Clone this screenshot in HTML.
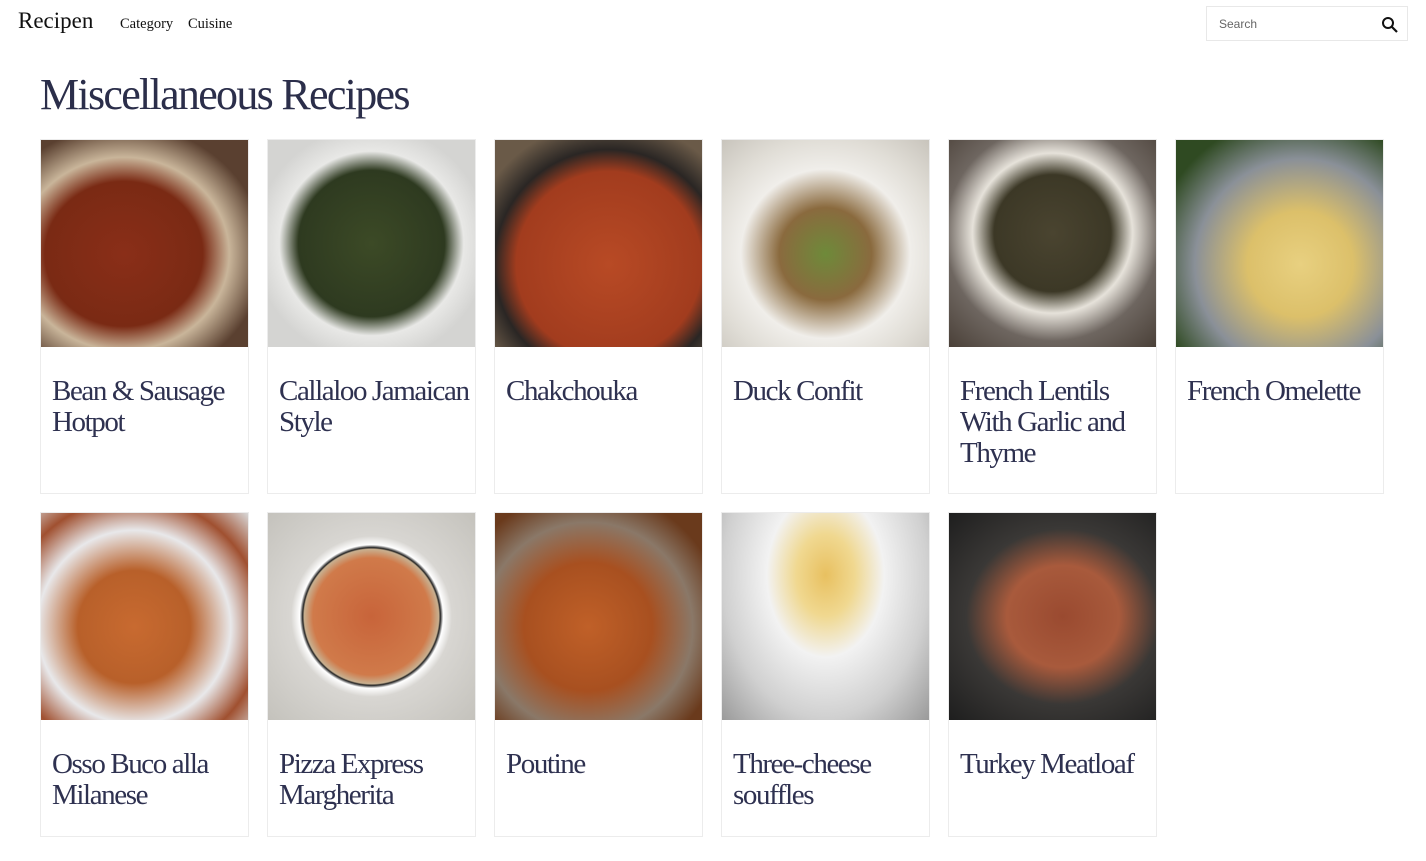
<!DOCTYPE html>
<html><head><meta charset="utf-8"><style>
*{margin:0;padding:0;box-sizing:border-box}
body{width:1426px;height:861px;background:#fff;font-family:"Liberation Serif",serif;position:relative;overflow:hidden}
.logo{position:absolute;left:18px;top:8px;font-size:23px;color:#111}
.nav{position:absolute;top:16px;font-size:14.5px;color:#111}
.search{position:absolute;left:1206px;top:6px;width:202px;height:35px;border:1px solid #e8e8e8;font-family:"Liberation Sans",sans-serif;font-size:12px;color:#666;padding:10px 0 0 12px}
.search svg{position:absolute;right:8px;top:9px}
h1{position:absolute;left:40px;top:69px;font-weight:normal;font-size:44px;color:#2b2e4a;letter-spacing:-1.7px}
.card{position:absolute;width:209px;border:1px solid #ececec;background:#fff}
.card .img{height:207px;width:207px}
.card .t{padding:29px 0 0 11px;font-size:29px;line-height:31px;color:#2e3150;letter-spacing:-1.4px}
</style></head><body>
<div class="logo">Recipen</div>
<div class="nav" style="left:120px">Category</div>
<div class="nav" style="left:188px">Cuisine</div>
<div class="search">Search<svg width="18" height="18" viewBox="0 0 18 18"><circle cx="7" cy="7" r="5" fill="none" stroke="#111" stroke-width="2"/><path d="M10.5 10.5L16 16" stroke="#111" stroke-width="2.2"/></svg></div>
<h1>Miscellaneous Recipes</h1>

<div class="card" style="left:40px;top:139px;height:355px"><div class="img" style="background:radial-gradient(ellipse at 40% 55%,#8a2e18 0,#7a2a14 45%,#c9b59a 60%,#5a4030 80%)"></div><div class="t">Bean &amp; Sausage Hotpot</div></div>
<div class="card" style="left:267px;top:139px;height:355px"><div class="img" style="background:radial-gradient(circle at 50% 50%,#3c4a26 0,#2e3a20 50%,#e8e8e6 63%,#d4d4d2 80%)"></div><div class="t">Callaloo Jamaican Style</div></div>
<div class="card" style="left:494px;top:139px;height:355px"><div class="img" style="background:radial-gradient(circle at 55% 60%,#b84a25 0,#a23c1e 55%,#2a2624 68%,#6a5a48 85%)"></div><div class="t">Chakchouka</div></div>
<div class="card" style="left:721px;top:139px;height:355px"><div class="img" style="background:radial-gradient(circle at 50% 55%,#6e8a3a 0,#8a6a3e 30%,#f0eeea 55%,#e0ddd6 75%,#c8c4bc 100%)"></div><div class="t">Duck Confit</div></div>
<div class="card" style="left:948px;top:139px;height:355px"><div class="img" style="background:radial-gradient(circle at 50% 45%,#4a4430 0,#3c3826 38%,#e6e2da 52%,#6e6660 70%,#4a4038 100%)"></div><div class="t">French Lentils With Garlic and Thyme</div></div>
<div class="card" style="left:1175px;top:139px;height:355px"><div class="img" style="background:radial-gradient(ellipse at 60% 60%,#e8d080 0,#dcc06a 30%,#8a9098 60%,#2f4a22 85%)"></div><div class="t">French Omelette</div></div>

<div class="card" style="left:40px;top:512px;height:325px"><div class="img" style="background:radial-gradient(ellipse at 45% 55%,#c86a30 0,#b8602a 35%,#e8e8ea 60%,#a05030 80%,#d8d8d8 100%)"></div><div class="t">Osso Buco alla Milanese</div></div>
<div class="card" style="left:267px;top:512px;height:325px"><div class="img" style="background:radial-gradient(circle at 50% 50%,#c8643a 0,#d07a4a 40%,#c8b090 46%,#222 47%,#fff 49%,#d8d6d2 55%,#c4c2bc 100%)"></div><div class="t">Pizza Express Margherita</div></div>
<div class="card" style="left:494px;top:512px;height:325px"><div class="img" style="background:radial-gradient(ellipse at 45% 55%,#c06028 0,#a85020 40%,#8a7868 65%,#6a3a1c 85%)"></div><div class="t">Poutine</div></div>
<div class="card" style="left:721px;top:512px;height:325px"><div class="img" style="background:radial-gradient(ellipse at 50% 30%,#e8c060 0,#f0d890 20%,#f2f2f2 40%,#d0d0d0 70%,#9a9a9a 100%)"></div><div class="t">Three-cheese souffles</div></div>
<div class="card" style="left:948px;top:512px;height:325px"><div class="img" style="background:radial-gradient(ellipse at 55% 50%,#9a4a30 0,#a85a3c 35%,#3a3836 60%,#1e1e1e 100%)"></div><div class="t">Turkey Meatloaf</div></div>
</body></html>
